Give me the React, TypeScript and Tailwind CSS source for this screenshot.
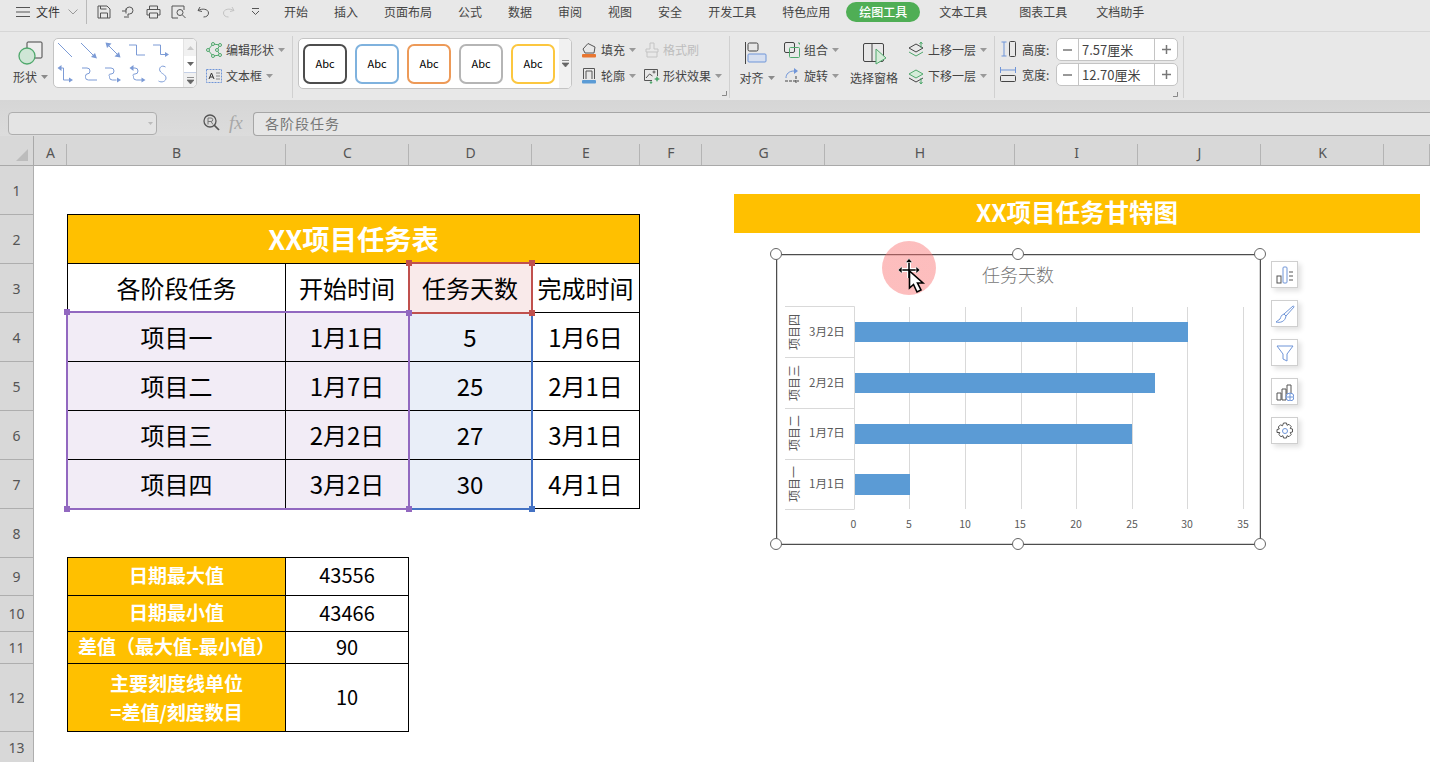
import React from "react";

const Caret = ({ c = "#8a8a8a" }: { c?: string }) => (
  <svg width="7" height="4" viewBox="0 0 7 4" className="ml-[4px] flex-none"><path d="M0 0h7L3.500 4z" fill={c} /></svg>
);

const Ic = ({ children, w = 16, h = 16, vb }: { children: React.ReactNode; w?: number; h?: number; vb?: string }) => (
  <svg width={w} height={h} viewBox={vb || `0 0 ${w} ${h}`} fill="none" className="flex-none">{children}</svg>
);

const D = "#555555";
const B = "#6f95d8";
const G = "#4fa86c";

const Q = ({ children }: { children: React.ReactNode }) => (
  <span className="flex w-[25px] flex-none justify-center">{children}</span>
);

const tabs1 = ["开始", "插入", "页面布局", "公式", "数据", "审阅", "视图", "安全", "开发工具", "特色应用"];

function TabBar() {
  return (
    <div className="flex h-8 flex-none items-start border-b border-[#d6d6d6] bg-[#e8e8e8] text-[12px] leading-[24px] text-[#444]">
      <div className="flex h-6 w-[87px] flex-none items-center border-r border-[#b9b9b9] pl-4">
        <Ic w={14} h={12}><path d="M0 1.5h14M0 6h14M0 10.500h14" stroke={D} /></Ic>
        <span className="ml-[6px] text-[#333]">文件</span>
        <svg width="10" height="6" viewBox="0 0 10 6" className="ml-[8px]"><path d="M.5.5 5 5 9.500.5" stroke="#999" fill="none" /></svg>
      </div>
      <div className="flex h-6 w-[184px] flex-none items-center pl-[4px]">
        <Q><Ic w={14} h={14}><path d="M1 1h9l3 3v9H1zM3.500 13V8h7v5M3.500 1v3h6" stroke={D} /></Ic></Q>
        <Q><Ic w={16} h={14}><path d="M5 5a3.500 3.500 0 1 1 3.500 4H7V13M1 6h4M5 3.500v5M3 12h3" stroke={D} /></Ic></Q>
        <Q><Ic w={15} h={14}><path d="M3.500 4V1h8v3M3.500 10H1V4.500h13V10h-2.500M3.500 8h8v5h-8z" stroke={D} /></Ic></Q>
        <Q><Ic w={16} h={14}><path d="M13 5V1H1v12h6" stroke={D} /><circle cx="9" cy="7.500" r="3" stroke={D} /><path d="m11.500 10 3 3" stroke={D} /></Ic></Q>
        <Q><Ic w={13} h={12}><path d="M3 1 1 4.500l4 1M1.500 4.500C5 2 11.500 3 11.500 7c0 2.500-2 4-5 4" stroke={D} /></Ic></Q>
        <Q><Ic w={13} h={12}><path d="m10 1 2 3.500-4 1M11.500 4.500C8 2 1.500 3 1.500 7c0 2.500 2 4 5 4" stroke="#c3c3c3" /></Ic></Q>
        <span className="ml-[4px] flex w-[20px] justify-center"><Ic w={9} h={8}><path d="M1 .5h7M1 3l3.500 3.500L8 3" stroke={D} /></Ic></span>
      </div>
      <div className="ml-[13px] flex gap-[26px]">{tabs1.map((t) => <span key={t}>{t}</span>)}</div>
      <div className="ml-[16px] mt-[2px] flex h-5 w-[74px] items-center justify-center rounded-full bg-[#4fae55] font-medium leading-none text-white">绘图工具</div>
      <span className="ml-[19px]">文本工具</span>
      <span className="ml-[32px]">图表工具</span>
      <span className="ml-[29px]">文档助手</span>
    </div>
  );
}

const Sep = () => <div className="mt-1 h-[62px] w-px flex-none bg-[#d0d0d0]" />;

const Row = ({ icon, label, caret, off, iw = 20 }: { icon: React.ReactNode; label: string; caret?: boolean; off?: boolean; iw?: number }) => (
  <div className={`flex h-[26px] items-center whitespace-nowrap ${off ? "text-[#bdbdbd]" : ""}`}>
    <span className="flex flex-none items-center" style={{ width: iw }}>{icon}</span>
    <span>{label}</span>
    {caret && <Caret c="#999" />}
  </div>
);

const Launcher = () => (
  <svg width="5" height="5" viewBox="0 0 5 5"><path d="M4.500 0v4.500H0" stroke="#888" fill="none" /></svg>
);

function ShapeGallery() {
  return (
    <div className="mt-[6px] flex h-[50px] w-[144px] flex-none overflow-hidden rounded-[5px] border border-[#c4c4c4] bg-white">
      <div className="flex-1 overflow-hidden">
        <svg width="130" height="48" viewBox="54 39 130 48" fill="none" stroke="#7c9bd6" strokeWidth="1">
          <path d="M58 43 72 57" />
          <path d="M81 43 94 56" /><path d="m97 58.500-6-1.500 4-4z" fill="#7c9bd6" stroke="none" />
          <path d="m108 45 10 10" /><path d="m105.500 42.500 6 1-4.500 4.500zM120.500 57.500l-6-1 4.500-4.500z" fill="#7c9bd6" stroke="none" />
          <path d="M129 45h7.500v10h8.500" />
          <path d="M153 45h7.500v9.500h5" /><path d="m169 54.500-4 2.500v-5z" fill="#7c9bd6" stroke="none" />
          <path d="M60 68h3.500v12h6" /><path d="m57.500 68 4-3v6zM73 80l-4 2.500v-5z" fill="#7c9bd6" stroke="none" />
          <path d="M82 68h5q3 0 3 3v0q0 3-3 3-1.500 0-1.500 2.500v1q0 2.500 3 2.500h8.500" />
          <path d="M105 68h6q3 0 3 3t-3 3-1.500 2.500v1q0 2.500 3 2.500h4" /><path d="m121 80-4 2.500v-5z" fill="#7c9bd6" stroke="none" />
          <path d="M132 68h3q3 0 3 3t-3 3-1.500 2.500v1q0 2.500 3 2.500h6" /><path d="m129.500 68 4-3v6zM145.500 80l-4 2.500v-5z" fill="#7c9bd6" stroke="none" />
          <path d="M165.500 67c-4-2.500-7 1-5.500 4 1.500 3 6 3.500 6 7s-4.500 5-7.500 3" />
        </svg>
      </div>
      <div className="flex w-[13px] flex-none flex-col border-l border-[#e3e3e3] bg-[#f1f1f1] text-[#777]">
        <div className="flex h-[17px] items-center justify-center"><svg width="7" height="4"><path d="M3.500 0 7 4H0z" fill="#c9c9c9" /></svg></div>
        <div className="flex h-[16px] items-center justify-center bg-white"><svg width="7" height="4"><path d="M0 0h7L3.500 4z" fill="#666" /></svg></div>
        <div className="flex h-[15px] items-center justify-center border-t border-[#c5d0e6]"><svg width="7" height="7"><path d="M0 .5h7M0 3h7L3.500 7z" stroke="#666" strokeWidth=".7" fill="#666" /></svg></div>
      </div>
    </div>
  );
}

const abc = ["border-[#4d4d4d]", "border-[#7fb2de]", "border-[#ed9a58]", "border-[#b5b5b5]", "border-[#fcc73f]"];

function StyleGallery() {
  return (
    <div className="ml-[5px] mt-[6px] flex h-[51px] w-[274px] flex-none overflow-hidden rounded-[5px] border border-[#c4c4c4] bg-white">
      <div className="flex flex-1 items-center gap-2 pl-1">
        {abc.map((c) => (
          <div key={c} className={`flex h-10 w-11 items-center justify-center rounded-[7px] border-2 text-[11px] text-black ${c}`}>Abc</div>
        ))}
      </div>
      <div className="flex w-[12px] flex-none items-center justify-center bg-[#f1f1f1]">
        <svg width="7" height="7"><path d="M0 .5h7M0 3h7L3.500 7z" stroke="#666" strokeWidth=".7" fill="#666" /></svg>
      </div>
    </div>
  );
}

function Spinner({ v }: { v: string }) {
  return (
    <div className="flex h-[23px] w-[122px] items-stretch rounded-[5px] border border-[#c4c4c4] bg-white text-[13px] text-[#444]">
      <div className="flex w-[22px] flex-none items-center justify-center border-r border-[#c4c4c4]"><svg width="9" height="2"><path d="M0 1h9" stroke="#777" strokeWidth="1.500" /></svg></div>
      <div className="flex flex-1 items-center pl-[3px]">{v}</div>
      <div className="flex w-[23px] flex-none items-center justify-center border-l border-[#c4c4c4]"><svg width="9" height="9"><path d="M0 4.500h9M4.500 0v9" stroke="#777" strokeWidth="1.500" /></svg></div>
    </div>
  );
}

function Ribbon() {
  return (
    <div className="flex h-[68px] flex-none bg-[#e8e8e8] text-[12px] text-[#444]">
      <div className="flex w-[53px] flex-none flex-col items-center pl-[8px] pt-[9px]">
        <Ic w={25} h={25}>
          <rect x="9" y="1" width="15" height="16" rx="1" stroke="#444" fill="#eee" />
          <circle cx="9" cy="15" r="8" fill="#cfe6d6" stroke={G} strokeWidth="1.300" />
        </Ic>
        <div className="mt-[2px] flex items-center leading-[18px]">形状<Caret /></div>
      </div>
      <ShapeGallery />
      <div className="w-[95px] flex-none pl-[9px] pt-[5px]">
        <Row iw={20} caret label="编辑形状" icon={
          <Ic><path d="M2 8 7 2l7 1-3 5 3 5-7 1z" stroke={G} /><circle cx="2" cy="8" r="1.500" fill="#e8e8e8" stroke={G} /><circle cx="7" cy="2" r="1.500" fill="#e8e8e8" stroke={G} /><circle cx="14" cy="3" r="1.500" fill="#e8e8e8" stroke={G} /><circle cx="11" cy="8" r="1.500" fill="#e8e8e8" stroke={G} /><circle cx="14" cy="13" r="1.500" fill="#e8e8e8" stroke={G} /><circle cx="7" cy="14" r="1.500" fill="#e8e8e8" stroke={G} /></Ic>
        } />
        <Row iw={20} caret label="文本框" icon={
          <Ic h={14}><rect x=".5" y=".5" width="15" height="13" stroke={B} strokeDasharray="2 1" /><path d="m3 10 2.500-6L8 10M4 8h3" stroke="#333" /><path d="M10 4h4M10 7h4M10 10h4" stroke="#888" /></Ic>
        } />
      </div>
      <Sep />
      <StyleGallery />
      <div className="relative flex w-[157px] flex-none pl-[9px] pt-[5px]">
        <div className="w-[63px] flex-none">
          <Row caret label="填充" icon={<Ic h={18}><path d="M2 8 7 2.500 14 6l-1 6H4z" stroke={D} /><rect x="1" y="13" width="14" height="3.500" rx="1" fill="#e8752f" /></Ic>} />
          <Row caret label="轮廓" icon={<Ic h={18}><path d="M2.500 12V1.500h11V12M5 12V4h6v8" stroke={D} /><rect x="1" y="13" width="14" height="3.500" rx="1" fill="#5b9bd5" /></Ic>} />
        </div>
        <div>
          <Row off iw={19} label="格式刷" icon={<Ic><path d="M6 1h4v6h4v3H2V7h4zM3 10v5h10v-5" stroke="#c4c4c4" /></Ic>} />
          <Row iw={19} caret label="形状效果" icon={<Ic><path d="M8 12.500H.5v-11h13V8" stroke={D} /><path d="m2 10 3.500-4 3 2" stroke={D} /><circle cx="10" cy="4" r="1" stroke={D} /><path d="m13 8 1 2 2 1-2 1-1 2-1-2-2-1 2-1zM7 13l1.500 1.500L7 16l-1.500-1.500z" fill={G} /></Ic>} />
        </div>
        <div className="mb-[4px] ml-auto mr-[5px] mt-auto"><Launcher /></div>
      </div>
      <Sep />
      <div className="flex w-[54px] flex-none flex-col items-center pt-[10px]">
        <div className="mr-[2px]"><Ic w={22} h={22}><path d="M.5 0v22" stroke="#444" /><rect x="3" y="1" width="10" height="8" rx="1.500" stroke="#444" /><rect x="3" y="12" width="18" height="8" rx="1" fill="#d6dff0" stroke={B} /></Ic></div>
        <div className="mt-[5px] flex items-center leading-[18px]">对齐<Caret /></div>
      </div>
      <div className="w-[66px] flex-none pt-[5px]">
        <Row caret label="组合" icon={<Ic><rect x=".5" y=".5" width="10" height="10" rx="1.500" stroke="#444" /><rect x="5.500" y="5.500" width="10" height="10" rx="1" stroke={G} /><path d="M14 1h1.500v1.500" stroke={G} /></Ic>} />
        <Row caret label="旋转" icon={<Ic><path d="M2 10C2 6 5 3 10 3" stroke={B} /><path d="m10 0 4 3-4 3z" fill={B} /><path d="M1 13h14M12 8v7" stroke="#444" strokeDasharray="3 1" /></Ic>} />
      </div>
      <div className="flex w-[48px] flex-none flex-col items-center pt-[11px]">
        <div className="ml-[1px]"><Ic w={24} h={22}><rect x=".5" y=".5" width="20" height="18" rx="1.500" stroke="#444" /><path d="M9 1v17" stroke="#444" /><path d="M13 6v15l10-6z" fill="#d5ecd9" stroke={G} /></Ic></div>
        <div className="mt-[4px] whitespace-nowrap leading-[18px]">选择窗格</div>
      </div>
      <div className="w-[96px] flex-none pl-[10px] pt-[5px]">
        <Row caret label="上移一层" icon={<Ic><path d="m1 6 7-4 7 4-7 4z" stroke="#444" /><path d="m1 10 7 4 7-4" stroke={G} /><path d="M13 6V0M11.500 2 13 0l1.500 2" stroke={G} /></Ic>} />
        <Row caret label="下移一层" icon={<Ic><path d="m1 6 7-4 7 4-7 4z" stroke={G} fill="#d5ecd9" /><path d="m1 10 7 4 7-4" stroke="#444" /><path d="M13 10v6M11.500 14l1.500 2 1.500-2" stroke={G} /></Ic>} />
      </div>
      <Sep />
      <div className="relative w-[188px] flex-none pl-[5px] pt-[6px]">
        <div className="flex h-[25px] items-start">
          <span className="mt-[3px] w-[22px] flex-none"><Ic h={16}><path d="M4 1v14M1.500 1h5M1.500 15h5" stroke={B} /><rect x="9.500" y=".5" width="6" height="15" rx="1" stroke="#444" /></Ic></span>
          <span className="w-[34px] flex-none leading-[23px]">高度:</span>
          <Spinner v="7.57厘米" />
        </div>
        <div className="flex h-[25px] items-start">
          <span className="mt-[3px] w-[22px] flex-none"><Ic h={16}><path d="M1 4h14M.5 1v6M15.500 1v6" stroke={B} /><rect x=".5" y="9.500" width="15" height="6" rx="1" stroke="#444" /></Ic></span>
          <span className="w-[34px] flex-none leading-[23px]">宽度:</span>
          <Spinner v="12.70厘米" />
        </div>
        <div className="ml-[173px] mt-[4px] leading-none"><Launcher /></div>
      </div>
      <Sep />
    </div>
  );
}

function FormulaBar() {
  return (
    <div className="flex h-9 flex-none items-end bg-gradient-to-b from-[#d6d6d6] to-[#dcdcdc]">
      <div className="mb-px ml-2 flex h-[23px] w-[149px] flex-none items-center justify-end rounded-[4px] border border-[#aeaeae] bg-[#e4e4e4] pr-[3px]">
        <svg width="5" height="3"><path d="M0 0h5L2.500 3z" fill="#bbb" /></svg>
      </div>
      <div className="mb-[2px] ml-[46px] flex h-[23px] w-[50px] flex-none items-center">
        <Ic w={17} h={17}><circle cx="7" cy="7" r="6" stroke="#555" strokeWidth="1.300" /><path d="M5 10.500V4h3a1.700 1.700 0 0 1 0 3.500H5M8 7.500l2 3" stroke="#777" /><path d="m11 11 5 5" stroke="#555" strokeWidth="1.700" /></Ic>
        <span className="ml-[9px] font-['Liberation_Serif',serif] text-[19px] italic leading-none text-[#a8a8a8]">fx</span>
      </div>
      <div className="flex h-6 flex-1 items-center rounded-bl-[4px] rounded-tl-[4px] border border-r-0 border-[#a6a6a6] bg-[#e6e6e6] pb-[2px] pl-[11px] text-[14px] tracking-[1px] text-[#777]">各阶段任务</div>
    </div>
  );
}

const colH = [
  ["A", "col-start-2"], ["B", "col-start-3"], ["C", "col-start-4"], ["D", "col-start-5"], ["E", "col-start-6"], ["F", "col-start-7"],
  ["G", "col-start-8"], ["H", "col-start-9"], ["I", "col-start-10"], ["J", "col-start-11"], ["K", "col-start-12"], ["", "col-start-13"],
];
const rowH = [
  ["1", "row-start-2"], ["2", "row-start-3"], ["3", "row-start-4"], ["4", "row-start-5"], ["5", "row-start-6"], ["6", "row-start-7"], ["7", "row-start-8"],
  ["8", "row-start-9"], ["9", "row-start-10"], ["10", "row-start-11"], ["11", "row-start-12"], ["12", "row-start-13"], ["13", "row-start-14"],
];

const cell = "flex items-center justify-center border-b border-r border-black";
const gold = "bg-[#ffc000] font-bold text-white";

type C = [string, string];
const tableCells: C[] = [
  ["各阶段任务", "col-start-3 row-start-4 border-l bg-white"],
  ["开始时间", "col-start-4 row-start-4 bg-white"],
  ["任务天数", "col-start-5 row-start-4 bg-[#f9eaea]"],
  ["完成时间", "col-start-6 row-start-4 bg-white"],
  ["项目一", "col-start-3 row-start-5 border-l bg-[#f2ecf6]"],
  ["1月1日", "col-start-4 row-start-5 bg-[#f2ecf6]"],
  ["5", "col-start-5 row-start-5 bg-[#e9eef8]"],
  ["1月6日", "col-start-6 row-start-5"],
  ["项目二", "col-start-3 row-start-6 border-l bg-[#f2ecf6]"],
  ["1月7日", "col-start-4 row-start-6 bg-[#f2ecf6]"],
  ["25", "col-start-5 row-start-6 bg-[#e9eef8]"],
  ["2月1日", "col-start-6 row-start-6"],
  ["项目三", "col-start-3 row-start-7 border-l bg-[#f2ecf6]"],
  ["2月2日", "col-start-4 row-start-7 bg-[#f2ecf6]"],
  ["27", "col-start-5 row-start-7 bg-[#e9eef8]"],
  ["3月1日", "col-start-6 row-start-7"],
  ["项目四", "col-start-3 row-start-8 border-l bg-[#f2ecf6]"],
  ["3月2日", "col-start-4 row-start-8 bg-[#f2ecf6]"],
  ["30", "col-start-5 row-start-8 bg-[#e9eef8]"],
  ["4月1日", "col-start-6 row-start-8"],
];

const H = ({ c, cls }: { c: string; cls: string }) => <div className={`absolute h-[6px] w-[6px] ${c} ${cls}`} />;
const Round = ({ cls }: { cls: string }) => (
  <div className={`absolute h-[12px] w-[12px] rounded-full border border-[#666] bg-white ${cls}`} />
);

const bars = [
  { y: 322, h: 20, x2: 1188, l: "3月2日", v: "项目四", c: 332 },
  { y: 373, h: 20, x2: 1155, l: "2月2日", v: "项目三", c: 383 },
  { y: 424, h: 20, x2: 1132, l: "1月7日", v: "项目二", c: 433 },
  { y: 474, h: 21, x2: 910, l: "1月1日", v: "项目一", c: 484 },
];
const gx = [909.500, 965.500, 1021.500, 1076.500, 1132.500, 1187.500, 1243.500];
const ax = [853.500, 909, 965, 1020, 1076, 1132, 1187, 1243];

function ChartSvg() {
  const f = "'Noto Sans CJK SC','Noto Sans',sans-serif";
  return (
    <svg width="485" height="291" viewBox="776 254 485 291" className="block" fontFamily={f}>
      <text x="1018" y="282" textAnchor="middle" fontSize="18" fill="#777777" fontWeight="300">任务天数</text>
      {gx.map((x) => <path key={x} d={`M${x} 307V509`} stroke="#d9d9d9" />)}
      <path d="M785 306.500H854.500V509M785 357.500H854.500M785 408.500H854.500M785 459.500H854.500M785 509.500H854.500" stroke="#d9d9d9" fill="none" />
      {bars.map((b) => (
        <g key={b.v}>
          <rect x="855" y={b.y} width={b.x2 - 855} height={b.h} fill="#5b9bd5" />
          <text x="827" y={b.c + 4} textAnchor="middle" fontSize="11.500" fill="#595959">{b.l}</text>
          <text transform={`translate(799 ${b.c}) rotate(-90)`} textAnchor="middle" fontSize="12" fill="#595959">{b.v}</text>
        </g>
      ))}
      {ax.map((x, i) => (
        <text key={x} x={x} y="528" textAnchor="middle" fontSize="10.500" fill="#595959">{i * 5}</text>
      ))}
    </svg>
  );
}

const Side = ({ children }: { children: React.ReactNode }) => (
  <div className="flex h-[27px] w-[27px] items-center justify-center border border-[#cfcfcf] bg-white shadow-[3px_3px_5px_rgba(0,0,0,0.12)]">{children}</div>
);

function SideTools() {
  return (
    <div className="absolute left-[1271px] top-[125px] flex flex-col gap-3">
      <Side><Ic w={18} h={18}><rect x="1" y="10" width="4" height="7" stroke="#555" /><rect x="7" y="1" width="4" height="16" rx="1" stroke={B} /><path d="M13 6h4M13 10h4M13 14h4" stroke="#555" /></Ic></Side>
      <Side><Ic w={20} h={20}><path d="M18 2 9 10l2 2 8-9c0-1-.5-1-1-1zM9 10c-3 1-3 3-4 5l-4 3c4 1 9 0 10-6z" stroke={B} /></Ic></Side>
      <Side><Ic w={18} h={18}><path d="M1 2h16l-6 8v7l-4-2v-5z" stroke={B} /></Ic></Side>
      <Side><Ic w={18} h={18}><path d="M1 10h4v7H1zM6 6h4v11H6zM11 2h4v9h-4z" stroke="#555" /><circle cx="14" cy="14" r="4" fill="#fff" stroke={B} /><path d="M10 14h8M14 10v8" stroke={B} /></Ic></Side>
      <Side><Ic w={18} h={18}><path d="M7.500 1h3l.5 2.300 2-1 2.200 2.200-1 2 2.300.5v3l-2.300.5 1 2-2.200 2.200-2-1-.5 2.300h-3l-.5-2.300-2 1-2.200-2.200 1-2L1 10.500v-3l2.300-.5-1-2L4.500 2.800l2 1z" stroke="#555" /><circle cx="9" cy="9" r="2.500" stroke={B} /></Ic></Side>
    </div>
  );
}

function CursorMark() {
  return (
    <div className="absolute left-[882px] top-[105px] h-[54px] w-[54px]">
      <div className="h-full w-full rounded-full bg-[radial-gradient(circle,rgba(250,110,110,0.45)_0%,rgba(250,110,110,0.45)_72%,rgba(250,110,110,0.12)_100%)]" />
      <svg width="54" height="54" viewBox="0 0 54 54" className="absolute left-0 top-0">
        <path d="M27 21v16M19 29h16" stroke="#fff" strokeWidth="4" />
        <path d="M27 21v16M19 29h16" stroke="#000" strokeWidth="1.500" />
        <path d="m27 17.500 3.500 4h-7zM16 29l4-3.500v7zM38 29l-4-3.500v7z" fill="#000" stroke="#fff" strokeWidth=".6" />
        <path d="M27.500 30v17l4-3.500 3.500 7.500 4-2-3.500-7h5.500z" fill="#fff" stroke="#000" strokeWidth="1.600" />
      </svg>
    </div>
  );
}

function Sheet() {
  return (
    <div className="relative grid flex-1 grid-cols-[34px_33px_219px_123px_123px_108px_62px_123px_190px_123px_123px_123px_46px] grid-rows-[30px_49px_49px_49px_49px_49px_49px_49px_49px_38px_36px_32px_68px_31px] overflow-hidden bg-white text-black">
      <div className="col-start-1 row-start-1 flex items-end justify-end border-b border-r border-[#a9a9a9] bg-[#d8d8d8] pb-[4px] pr-[5px]">
        <svg width="12" height="12"><path d="M12 0v12H0z" fill="#bcbcbc" /></svg>
      </div>
      {colH.map(([t, c]) => (
        <div key={c} className={`relative row-start-1 flex items-end justify-center border-b border-[#a9a9a9] bg-[#d8d8d8] pb-[2px] font-['Noto_Sans',sans-serif] text-[14px] text-[#555] after:absolute after:bottom-0 after:right-0 after:h-[21px] after:w-px after:bg-[#b4b4b4] ${c}`}>{t}</div>
      ))}
      {rowH.map(([t, c]) => (
        <div key={c} className={`col-start-1 flex items-center justify-center border-b border-r border-[#aeaeae] bg-[#d8d8d8] font-['Noto_Sans',sans-serif] text-[14px] text-[#555] ${c}`}>{t}</div>
      ))}

      <div className={`${cell} ${gold} col-start-3 col-end-7 row-start-3 -mt-px border-l border-t pb-[2px] text-[27.300px]`}>XX项目任务表</div>
      {tableCells.map(([t, c]) => (
        <div key={t + c} className={`${cell} text-[24px] ${c}`}>{t}</div>
      ))}

      <div className={`${cell} ${gold} col-start-3 row-start-10 -mt-px border-l border-t pb-[3px] text-[19px]`}>日期最大值</div>
      <div className={`${cell} col-start-4 row-start-10 -mt-px border-t pb-[3px] text-[20px]`}>43556</div>
      <div className={`${cell} ${gold} col-start-3 row-start-11 border-l pb-[2px] text-[19px]`}>日期最小值</div>
      <div className={`${cell} col-start-4 row-start-11 pb-[2px] text-[20px]`}>43466</div>
      <div className={`${cell} ${gold} col-start-3 row-start-12 border-l pb-[2px] whitespace-nowrap text-[19px]`}>差值（最大值-最小值）</div>
      <div className={`${cell} col-start-4 row-start-12 pb-[2px] text-[20px]`}>90</div>
      <div className={`${cell} ${gold} col-start-3 row-start-13 flex-col border-l pb-[2px] text-[19px] leading-[29px]`}><span>主要刻度线单位</span><span>=差值/刻度数目</span></div>
      <div className={`${cell} col-start-4 row-start-13 pb-[2px] text-[20px]`}>10</div>

      <div className="pointer-events-none relative col-start-5 row-start-5 row-end-9 -m-px -mt-[2px] border-b-2 border-r-2 border-[#4472c4]">
        <H c="bg-[#4472c4]" cls="-bottom-[4px] -right-[4px]" />
      </div>
      <div className="pointer-events-none relative col-start-3 col-end-5 row-start-5 row-end-9 -m-px -mt-[2px] border-2 border-[#9268c0]">
        <H c="bg-[#9268c0]" cls="-left-[4px] -top-[4px]" />
        <H c="bg-[#9268c0]" cls="-bottom-[4px] -left-[4px]" />
        <H c="bg-[#9268c0]" cls="-bottom-[4px] -right-[4px]" />
      </div>
      <div className="pointer-events-none relative col-start-5 row-start-4 -m-px -mt-[2px] border-2 border-[#c0504d]">
        <H c="bg-[#c0504d]" cls="-left-[4px] -top-[4px]" />
        <H c="bg-[#c0504d]" cls="-right-[4px] -top-[4px]" />
        <H c="bg-[#c0504d]" cls="-bottom-[4px] -right-[4px]" />
        <H c="bg-[#9268c0]" cls="-bottom-[4px] -left-[4px]" />
      </div>

      <div className="absolute left-[734px] top-[58px] flex h-[39px] w-[686px] items-center justify-center bg-[#ffc000] pb-[2px] text-[24.500px] font-bold text-white">XX项目任务甘特图</div>

      <div className="absolute left-[776px] top-[118px] h-[291px] w-[485px] border border-[#4d4d4d] bg-white shadow-[inset_0_0_0_1px_#d4d4d4]">
        <div className="-m-px"><ChartSvg /></div>
        <Round cls="-left-[7px] -top-[7px]" />
        <Round cls="-top-[7px] left-[235px]" />
        <Round cls="-right-[6px] -top-[7px]" />
        <Round cls="-bottom-[6px] -left-[7px]" />
        <Round cls="-bottom-[6px] left-[235px]" />
        <Round cls="-bottom-[6px] -right-[6px]" />
      </div>
      <CursorMark />
      <SideTools />
    </div>
  );
}

export default function App() {
  return (
    <div className="flex h-[762px] w-[1430px] flex-col overflow-hidden font-['Noto_Sans_CJK_SC','Liberation_Sans',sans-serif]">
      <TabBar />
      <Ribbon />
      <FormulaBar />
      <Sheet />
    </div>
  );
}
